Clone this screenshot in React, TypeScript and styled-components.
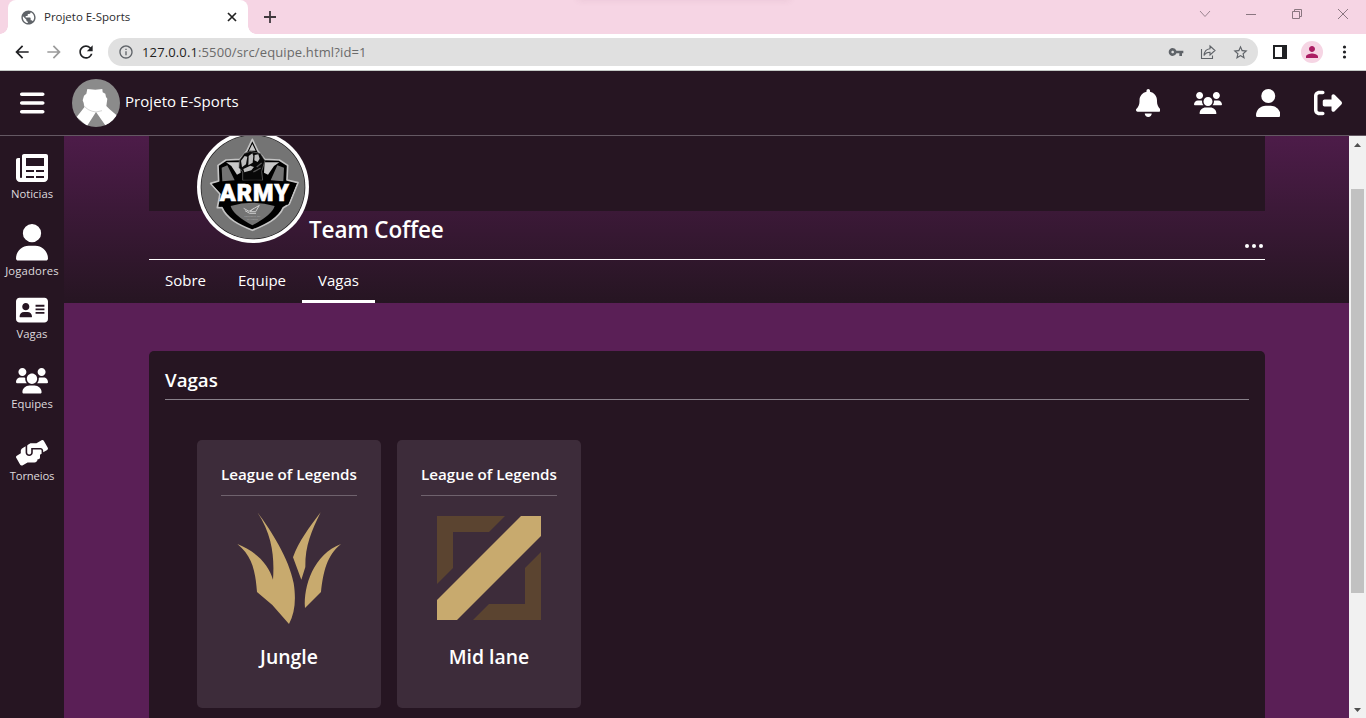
import React from "react";
import styled, { createGlobalStyle } from "styled-components";
import { FaBars, FaBell, FaUser, FaRightFromBracket } from "react-icons/fa6";
import { MdPublic, MdInfoOutline, MdVpnKey, MdStarBorder, MdPerson, MdRefresh, MdArrowBack, MdArrowForward } from "react-icons/md";

const ink = "#261522";
const purple = "#5a1f56";

const GlobalStyle = createGlobalStyle`
  * { box-sizing: border-box; }
  html, body { margin: 0; padding: 0; overflow: hidden; }
  body { font-family: "Open Sans", "Noto Sans", sans-serif; color: #fff; background: ${ink}; }
  svg { display: block; flex: none; }
  h1, h2, h3, h4, p { margin: 0; }
`;

const Window = styled.div`
  width: 1366px;
  height: 718px;
  display: flex;
  flex-direction: column;
  overflow: hidden;
`;

/* Browser frame */
const TabStrip = styled.div`
  height: 34px;
  flex: none;
  display: flex;
  align-items: stretch;
  background: #f6d5e4;
  padding-left: 8px;
  position: relative;
`;

const TopShade = styled.div`
  position: absolute;
  left: 578px;
  top: -8px;
  width: 212px;
  height: 8px;
  box-shadow: 0 0 7px rgba(120, 60, 90, 0.1);
`;

const BrowserTab = styled.div`
  position: relative;
  width: 240px;
  display: flex;
  align-items: center;
  padding: 0 10px 0 12px;
  border-radius: 8px 8px 0 0;
  background: #fff;
  color: #3c4043;
  &::before, &::after {
    content: "";
    position: absolute;
    bottom: 0;
    width: 8px;
    height: 8px;
  }
  &::before { left: -8px; background: radial-gradient(circle at 0 0, transparent 7.5px, #fff 8px); }
  &::after { right: -8px; background: radial-gradient(circle at 100% 0, transparent 7.5px, #fff 8px); }
`;

const TabTitle = styled.span`
  flex: 1;
  margin-left: 7px;
  font-size: 11.5px;
  letter-spacing: -0.02px;
  line-height: 16px;
  white-space: nowrap;
  color: #2c2c2e;
`;

const NewTab = styled.div`
  display: flex;
  align-items: center;
  margin-left: 16px;
  flex: 1;
`;

const WindowButtons = styled.div`
  display: flex;
  align-items: center;
  padding: 0 17px 6px 0;
  gap: 34px;
`;

const Toolbar = styled.div`
  height: 37px;
  flex: none;
  display: flex;
  align-items: center;
  background: #fff;
  border-bottom: 1px solid #c3c9c5;
  padding: 0 14px 0 12px;
`;

const NavButtons = styled.div`
  display: flex;
  gap: 12px;
  margin-right: 12px;
  color: #202124;
`;

const AddressBar = styled.div`
  flex: none;
  width: 1150px;
  height: 28px;
  display: flex;
  align-items: center;
  border-radius: 14px;
  background: #e0e0e0;
  color: #5f6368;
  padding: 0 9px 0 10px;
`;

const Url = styled.div`
  flex: 1;
  margin-left: 8px;
  font-size: 13px;
  letter-spacing: 0.13px;
  line-height: 18px;
  color: #6a6a6a;
  b { font-weight: 400; color: #222; }
`;

const AddressActions = styled.div`
  display: flex;
  align-items: center;
  gap: 16px;
`;

const ChromeActions = styled.div`
  flex: 1;
  display: flex;
  align-items: center;
  justify-content: space-between;
  padding-left: 15px;
`;

const ProfileBubble = styled.div`
  width: 22px;
  height: 22px;
  display: grid;
  place-items: center;
  border-radius: 50%;
  background: #f6d5e4;
  color: #ab1e63;
`;

/* Site */
const SiteHeader = styled.header`
  height: 65px;
  flex: none;
  display: flex;
  align-items: center;
  justify-content: space-between;
  background: ${ink};
  border-bottom: 1px solid #645863;
  padding: 0 8px 0 20px;
`;

const Brand = styled.div`
  display: flex;
  align-items: center;
`;

const Avatar = styled.svg`
  width: 48px;
  height: 48px;
  margin-left: 24px;
  border-radius: 50%;
`;

const BrandName = styled.span`
  margin-left: 5px;
  font-size: 15px;
  letter-spacing: 0.05px;
  line-height: 24px;
  padding-bottom: 4px;
`;

const HeaderActions = styled.nav`
  display: flex;
`;

const HeaderAction = styled.div<{ $w: number; $h: number }>`
  width: 60px;
  height: 60px;
  display: grid;
  place-items: center;
  svg { width: ${(p) => p.$w}px; height: ${(p) => p.$h}px; }
`;

const Body = styled.div`
  flex: 1;
  min-height: 0;
  display: flex;
`;

const Sidebar = styled.nav`
  width: 64px;
  flex: none;
  background: ${ink};
  padding-top: 16px;
`;

const SideItem = styled.div<{ $h: number }>`
  height: 72px;
  display: flex;
  flex-direction: column;
  align-items: center;
  svg { width: 32px; height: ${(p) => p.$h}px; }
`;

const SideLabel = styled.span<{ $spacing: number }>`
  font-size: 11.3px;
  line-height: 16px;
  margin-top: 2px;
  letter-spacing: ${(p) => p.$spacing}px;
  color: #dedadd;
  white-space: nowrap;
`;

const Main = styled.main`
  flex: 1;
  min-width: 0;
  overflow: hidden;
  background: ${purple};
`;

const Profile = styled.section`
  height: 167px;
  background: linear-gradient(#4d1c49, ${ink});
  padding: 0 84px 0 85px;
`;

const Cover = styled.div`
  height: 75px;
  background: ${ink};
`;

const ProfileRow = styled.div`
  height: 49px;
  display: flex;
  align-items: flex-start;
  border-bottom: 1px solid #fff;
  padding-left: 48px;
`;

const TeamBadge = styled.svg`
  width: 112px;
  height: 112px;
  margin-top: -80px;
`;

const TeamName = styled.h1`
  flex: 1;
  font-size: 22.5px;
  font-weight: 600;
  letter-spacing: -0.15px;
  line-height: 30px;
  padding-top: 4px;
`;

const MoreButton = styled.div`
  display: flex;
  gap: 3px;
  margin: 33px 2px 0 0;
  i { width: 4px; height: 4px; border-radius: 50%; background: #fff; }
`;

const Tabs = styled.div`
  display: flex;
  height: 43px;
`;

const Tab = styled.div<{ $width: number; $active?: boolean }>`
  width: ${(p) => p.$width}px;
  text-align: center;
  font-size: 15px;
  line-height: 41px;
  border-bottom: 3px solid ${(p) => (p.$active ? "#fff" : "transparent")};
`;

const Panel = styled.section`
  height: 420px;
  margin: 48px 84px 0 85px;
  padding: 16px;
  border-radius: 5px;
  background: ${ink};
`;

const PanelTitle = styled.h2`
  height: 33px;
  font-size: 18.7px;
  font-weight: 600;
  line-height: 26px;
  border-bottom: 1px solid #88808a;
`;

const CardList = styled.div`
  display: flex;
  gap: 16px;
  padding: 40px 32px;
`;

const Card = styled.article`
  width: 184px;
  height: 268px;
  padding: 24px;
  border-radius: 5px;
  background: #3d2c3a;
  display: flex;
  flex-direction: column;
  align-items: center;
`;

const CardGame = styled.h3`
  width: 136px;
  height: 32px;
  text-align: center;
  white-space: nowrap;
  font-size: 15.2px;
  font-weight: 600;
  line-height: 20px;
  border-bottom: 1px solid #6f626d;
`;

const RoleArt = styled.svg`
  width: 136px;
  height: 136px;
  margin-top: 4px;
`;

const CardRole = styled.h4`
  font-size: 19.4px;
  font-weight: 600;
  line-height: 26px;
  margin-top: 8px;
`;

const Scrollbar = styled.div`
  width: 17px;
  flex: none;
  display: flex;
  flex-direction: column;
  align-items: center;
  justify-content: space-between;
  background: #f1f1f1;
`;

const Thumb = styled.div`
  width: 13px;
  height: 404px;
  margin-bottom: 72px;
  background: #c1c1c1;
`;

function NewsIcon() {
  return (
    <svg viewBox="0 0 512 512" fill="currentColor">
      <path fillRule="evenodd" d="M480 32H128C110.300 32 96 46.300 96 64v336c0 8.800-7.200 16-16 16s-16-7.200-16-16V96H32C14.300 96 0 110.300 0 128v288c0 35.300 28.700 64 64 64h384c35.300 0 64-28.700 64-64V64c0-17.700-14.300-32-32-32zM160 96H448V224H160ZM160 288H288V320H160ZM320 288H448V320H320ZM160 384H288V416H160ZM320 384H448V416H320Z" />
    </svg>
  );
}

function CardIcon() {
  return (
    <svg viewBox="0 0 576 512" fill="currentColor">
      <path fillRule="evenodd" d="M512 32H64C28.600 32 0 60.600 0 96v320c0 35.400 28.600 64 64 64h448c35.400 0 64-28.600 64-64V96c0-35.400-28.600-64-64-64zM176 128c35.300 0 64 28.700 64 64s-28.700 64-64 64-64-28.700-64-64 28.700-64 64-64zM80 384C71.200 384 64 376.800 64 368c0-44.200 35.800-80 80-80h64c44.200 0 80 35.800 80 80 0 8.800-7.200 16-16 16ZM352 160H512V192H352ZM352 224H512V256H352ZM352 288H512V320H352Z" />
    </svg>
  );
}

function GroupIcon() {
  return (
    <svg viewBox="0 0 640 512" fill="currentColor">
      <path d="M320 320c57.400 0 103.100-46.600 103.100-104S377.400 112 320 112 216.900 158.600 216.900 216 262.600 320 320 320zM369.900 352H270.100C191.600 352 128 411.700 128 485.300 128 500.100 140.700 512 156.400 512h327.200c15.700 0 28.400-11.900 28.400-26.700C512 411.700 448.400 352 369.900 352zM512 160c44.200 0 80-35.800 80-80S556.200 0 512 0s-80 35.800-80 80 35.800 80 80 80zM183.900 216c0-5.400 1-10.600 1.600-15.900C174.600 194.100 162.600 192 149.900 192H88.100C39.400 192 0 233.800 0 285.300 0 295.600 7.900 304 17.600 304h199.500C196.700 280.200 183.900 249.700 183.900 216zM128 160c44.200 0 80-35.800 80-80S172.200 0 128 0 48 35.800 48 80s35.800 80 80 80zM551.900 192h-61.800c-12.800 0-24.900 3-35.900 8.200 .6 5.300 1.600 10.400 1.600 15.800 0 33.700-12.800 64.200-33.200 88h199.700c9.800 0 17.700-8.400 17.700-18.700C640 233.800 600.600 192 551.900 192z" />
    </svg>
  );
}

function HandsIcon() {
  return (
    <svg viewBox="0 0 640 512" fill="currentColor">
      <path d="M488 192H336v56c0 39.700-32.300 72-72 72s-72-32.300-72-72V126.400l-64.900 39C107.800 176.900 96 197.800 96 220.200v47.300l-80 46.200C.7 322.500-4.600 342.100 4.300 357.400l80 138.600c8.800 15.300 28.400 20.500 43.700 11.700L231.400 448H368c35.300 0 64-28.700 64-64h16c17.700 0 32-14.300 32-32v-64h8c13.300 0 24-10.700 24-24v-48c0-13.300-10.700-24-24-24zm147.700-37.400L555.700 16C546.900.7 527.300-4.500 512 4.300L408.600 64H306.400c-12 0-23.700 3.400-33.900 9.700L239 94.600c-9.400 5.800-15 16.100-15 27.100V248c0 22.100 17.900 40 40 40s40-17.900 40-40v-88h184c30.900 0 56 25.100 56 56v28.500l80-46.200c15.300-8.900 20.500-28.400 11.700-43.700z" />
    </svg>
  );
}

const sideItems = [
  { label: "Noticias", Icon: NewsIcon, height: 32, spacing: 0 },
  { label: "Jogadores", Icon: FaUser, height: 36.6, spacing: 0.15 },
  { label: "Vagas", Icon: CardIcon, height: 28.4, spacing: 0 },
  { label: "Equipes", Icon: GroupIcon, height: 25.6, spacing: 0 },
  { label: "Torneios", Icon: HandsIcon, height: 25.6, spacing: -0.2 },
];

function JungleArt() {
  return (
    <RoleArt viewBox="93 210 408 408" fill="#c8aa6e">
      <path d="M202 247C242 300 297 385 311 460C319 510 314 549 297 582L247 525L201 486C196 425 188 379 142 342C194 362 236 401 249 449C253 388 250 320 202 247Z" />
      <path d="M392 247C365 303 345 346 346 411L334 449L309 382C325 336 359 290 392 247Z" />
      <path d="M453 342C410 377 400 425 393 486L345 534C340 468 371 373 453 342Z" />
    </RoleArt>
  );
}

function MidArt() {
  return (
    <RoleArt viewBox="93 210 408 408">
      <path fill="#5b4430" d="M141 258H345L297 306H189V414L141 462ZM453 366V570H249L297 522H405V414Z" />
      <path fill="#c8aa6e" d="M393 258H453V318L201 570H141V510Z" />
    </RoleArt>
  );
}

function ArmyBadge() {
  return (
    <TeamBadge viewBox="21 3 336 336">
      <circle cx="189" cy="171" r="168" fill="#fff" />
      <circle cx="189" cy="171" r="157" fill="#171517" />
      <circle cx="189" cy="171" r="155" fill="#747474" />
      <path fill="#000" stroke="#c4c4c4" strokeWidth="5" strokeLinejoin="round" d="M187 28L203 62L224 88L268 90L293 106L291 150L324 158L298 222L280 233C265 267 228 284 187 301C146 284 111 267 96 233L82 233L90 192L62 160L86 153L84 106L108 90L150 88L171 62Z" />
      <path fill="#747474" d="M95 113L112 106L134 151L97 154ZM282 113L262 106L242 151L280 154Z" />
      <path fill="#c8c8c8" d="M108 97L150 97L152 128L141 134L124 108ZM268 97L224 97L222 128L234 134L252 108ZM187 42L197 62L177 62Z" />
      <path fill="#747474" d="M122 228Q187 208 254 228Q247 254 187 286Q128 254 122 228Z" />
      <path fill="#080808" stroke="#777" strokeWidth="2" d="M148 91L163 70L181 64L190 66L211 70L225 92L215 124L218 151L158 151L158 126L147 113Z" />
      <path fill="#bdbdbd" d="M153 92L164 78L172 80L168 103L156 112ZM176 78L187 70L190 78L188 98L175 106ZM194 75L205 73L209 86L203 96L193 91ZM160 117L181 107L192 111L184 121L163 127Z" />
      <path fill="none" stroke="#555" strokeWidth="4" d="M200 111L215 99M190 126L212 114" />
      <path fill="#000" d="M66 162Q190 140 320 160L294 224Q187 206 88 230L96 194Z" />
      <text x="89" y="214" textLength="208" lengthAdjust="spacing" fill="#fff" stroke="#fff" strokeWidth="2" fontFamily="Roboto" fontWeight="900" fontSize="70">ARMY</text>
      <path fill="none" stroke="#ccc" strokeWidth="3" d="M161 235L177 244L208 226L197 245H180L192 234M165 242L179 250H198" />
      <text x="163" y="261" textLength="48" lengthAdjust="spacingAndGlyphs" fill="#aaa" fontSize="7">REPUBLIC OF</text>
      <text x="171" y="269" textLength="32" lengthAdjust="spacingAndGlyphs" fill="#aaa" fontSize="7">GAMERS</text>
    </TeamBadge>
  );
}

export default function App() {
  return (
    <Window>
      <GlobalStyle />
      <TabStrip>
        <TopShade />
        <BrowserTab>
          <MdPublic size={17} color="#5f6368" />
          <TabTitle>Projeto E-Sports</TabTitle>
          <svg width="12" height="12" viewBox="0 0 12 12" stroke="#222" strokeWidth="1.7">
            <path d="M2 2L10 10M10 2L2 10" />
          </svg>
        </BrowserTab>
        <NewTab>
          <svg width="12" height="12" viewBox="0 0 12 12" stroke="#40383d" strokeWidth="1.8">
            <path d="M6 0V12M0 6H12" />
          </svg>
        </NewTab>
        <WindowButtons>
          <svg width="12" height="12" viewBox="0 0 12 12" fill="none" stroke="#9a848f"><path d="M1 3L6 8.5L11 3" /></svg>
          <svg width="12" height="12" viewBox="0 0 12 12" fill="none" stroke="#8a7680"><path d="M1 6.5H11" /></svg>
          <svg width="12" height="12" viewBox="0 0 12 12" fill="none" stroke="#8a7680"><path d="M1.5 3.5H8.5V10.5H1.5ZM3.5 3V1.5H10.5V8.5H9" /></svg>
          <svg width="12" height="12" viewBox="0 0 12 12" fill="none" stroke="#8a7680"><path d="M1 1L11 11M11 1L1 11" /></svg>
        </WindowButtons>
      </TabStrip>
      <Toolbar>
        <NavButtons>
          <MdArrowBack size={20} />
          <MdArrowForward size={20} color="#9b9b9b" />
          <MdRefresh size={20} />
        </NavButtons>
        <AddressBar>
          <MdInfoOutline size={16} />
          <Url><b>127.0.0.1</b>:5500/src/equipe.html?id=1</Url>
          <AddressActions>
            <MdVpnKey size={16} />
            <svg width="16" height="16" viewBox="0 0 16 16" fill="none" stroke="#5f6368" strokeWidth="1.1">
              <path d="M1.5 5V14.500H12.500V11.500M10 2L15 6.500L10 11V8.300C7 8.300 5.300 9.300 4 11.500C4.300 7.500 6.500 5 10 4.700Z" />
            </svg>
            <MdStarBorder size={17} />
          </AddressActions>
        </AddressBar>
        <ChromeActions>
          <svg width="14" height="14" viewBox="0 0 14 14" fill="#202124"><path fillRule="evenodd" d="M0 0H14V14H0ZM2 2V12H9V2Z" /></svg>
          <ProfileBubble><MdPerson size={18} /></ProfileBubble>
          <svg width="16" height="16" viewBox="0 0 16 16" fill="#202124">
            <circle cx="8.5" cy="3" r="1.6" /><circle cx="8.5" cy="8" r="1.6" /><circle cx="8.5" cy="13" r="1.6" />
          </svg>
        </ChromeActions>
      </Toolbar>
      <SiteHeader>
        <Brand>
          <FaBars size={28} preserveAspectRatio="xMinYMid meet" />
          <Avatar viewBox="216 237 144 144">
            <path fill="#8b8b8b" d="M216 237H360V381H216Z" />
            <path fill="#fff" d="M262 267L286 269L307 267L308 277L316 281L318 291L322 296L319 318L328 327L349 345V360L317 377L288 336L261 378L230 351L253 322L251 309L248 301L252 287L259 281Z" />
            <path fill="none" stroke="#aaa" strokeWidth="1.5" d="M251 316Q263 333 288 336L306 332" />
          </Avatar>
          <BrandName>Projeto E-Sports</BrandName>
        </Brand>
        <HeaderActions>
          <HeaderAction $w={24.5} $h={28}><FaBell /></HeaderAction>
          <HeaderAction $w={28} $h={22.4}><GroupIcon /></HeaderAction>
          <HeaderAction $w={24.5} $h={28}><FaUser /></HeaderAction>
          <HeaderAction $w={28} $h={28}><FaRightFromBracket /></HeaderAction>
        </HeaderActions>
      </SiteHeader>
      <Body>
        <Sidebar>
          {sideItems.map(({ label, Icon, height, spacing }) => (
            <SideItem key={label} $h={height}>
              <Icon />
              <SideLabel $spacing={spacing}>{label}</SideLabel>
            </SideItem>
          ))}
        </Sidebar>
        <Main>
          <Profile>
            <Cover />
            <ProfileRow>
              <ArmyBadge />
              <TeamName>Team Coffee</TeamName>
              <MoreButton><i /><i /><i /></MoreButton>
            </ProfileRow>
            <Tabs>
              <Tab $width={73}>Sobre</Tab>
              <Tab $width={80}>Equipe</Tab>
              <Tab $width={73} $active>Vagas</Tab>
            </Tabs>
          </Profile>
          <Panel>
            <PanelTitle>Vagas</PanelTitle>
            <CardList>
              <Card>
                <CardGame>League of Legends</CardGame>
                <JungleArt />
                <CardRole>Jungle</CardRole>
              </Card>
              <Card>
                <CardGame>League of Legends</CardGame>
                <MidArt />
                <CardRole>Mid lane</CardRole>
              </Card>
            </CardList>
          </Panel>
        </Main>
        <Scrollbar>
          <svg width="17" height="17" viewBox="0 0 17 17" fill="#505050"><path d="M5 11L8.5 7L12 11Z" /></svg>
          <Thumb />
          <svg width="17" height="17" viewBox="0 0 17 17" fill="#505050"><path d="M5 7L8.5 11L12 7Z" /></svg>
        </Scrollbar>
      </Body>
    </Window>
  );
}
